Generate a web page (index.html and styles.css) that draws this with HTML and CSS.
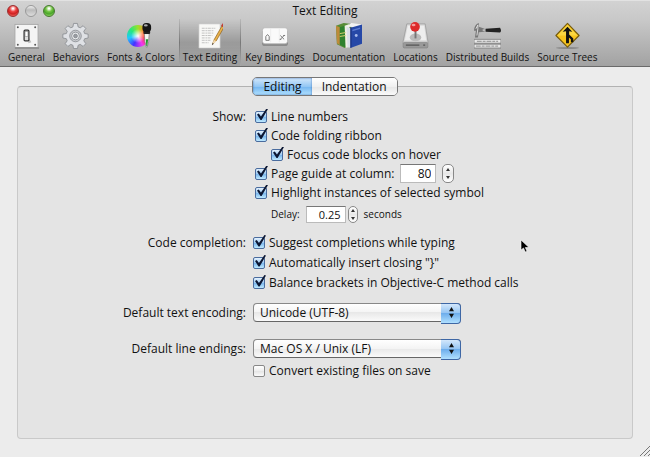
FILE: index.html
```html
<!DOCTYPE html>
<html lang="en">
<head>
    <meta charset="UTF-8">
    <meta name="viewport" content="width=device-width, initial-scale=1.0">
    <title>Text Editing</title>
    <link rel="stylesheet" href="styles.css">
</head>
<body>

    <header class="window-head">
        <div class="titlebar">
            <div class="lights">
                <button type="button" class="light red" aria-label="Close"></button>
                <button type="button" class="light gray" aria-label="Minimize"></button>
                <button type="button" class="light green" aria-label="Zoom"></button>
            </div>
            <h1>Text Editing</h1>
        </div>

        <nav class="toolbar">
            <button type="button" class="tool">
                <svg viewBox="0 0 28 28">
                    <rect x="2" y="2.5" width="24" height="24" fill="#f4f4f4" stroke="#aaa"/>
                    <path d="M2 27h25" stroke="#777"/>
                    <g fill="#555"><circle cx="5" cy="5.500" r="1"/><circle cx="23" cy="5.500" r="1"/><circle cx="5" cy="23.500" r="1"/><circle cx="23" cy="23.500" r="1"/></g>
                    <path d="M15 14l4 7-3 1z" fill="#bbb"/>
                    <rect x="11.500" y="8.500" width="5" height="11" rx="1" fill="#ddd" stroke="#333" stroke-width="1.300"/>
                    <rect x="12.500" y="10" width="3" height="5" fill="#fff" stroke="#777" stroke-width=".5"/>
                </svg>
                General
            </button>
            <button type="button" class="tool">
                <svg viewBox="0 0 28 28">
                    <g fill="#dfe1e5" stroke="#85888e" stroke-width=".8">
                        <path d="M12 1.500h4l.7 3.600 2.200.9 3-2.100 2.800 2.800-2.100 3 .9 2.300 3.600.6v4l-3.600.7-.9 2.200 2.100 3-2.800 2.800-3-2.100-2.200.9-.7 3.400h-4l-.7-3.400-2.200-.9-3 2.100-2.800-2.800 2.100-3-.9-2.200-3.600-.7v-4l3.600-.6.900-2.300-2.100-3 2.800-2.800 3 2.100 2.200-.9z"/>
                        <circle cx="14" cy="14.500" r="6" fill="#c6c8cc"/>
                        <circle cx="14" cy="14.500" r="4" fill="#eef0f2"/>
                        <circle cx="14" cy="14.500" r="2" fill="#999ca2"/>
                    </g>
                </svg>
                Behaviors
            </button>
            <button type="button" class="tool">
                <span class="wheel-icon">
                    <span class="wheel"></span>
                    <svg viewBox="0 0 28 28">
                        <path d="M18 12h5l-.500 8-1.500 6h-1l-1.500-6z" fill="#f4f8f2" stroke="#777" stroke-width=".7"/>
                        <path d="M19.500 18h2.500l-1 7h-1z" fill="#239a30"/>
                        <rect x="17" y="9" width="7" height="3.500" rx="1" fill="#222"/>
                        <rect x="16" y="1" width="9" height="9.500" rx="4" fill="#151515"/>
                        <ellipse cx="19.500" cy="3.500" rx="2" ry="1.200" fill="#aaa"/>
                    </svg>
                </span>
                Fonts &amp; Colors
            </button>
            <button type="button" class="tool selected">
                <svg viewBox="0 0 28 28">
                    <path d="M3 2h22v25H3z" fill="#f8f8f6" stroke="#c4c4c4" stroke-width=".6"/>
                    <g stroke="#aaa" stroke-width=".7" stroke-dasharray="3 .8 2 .6">
                        <path d="M6 6.500h14M6 9h12M6 11.500h12M6 14h11M6 16.500h9M6 19h9M6 21.500h7"/>
                    </g>
                    <path d="M17 23l2-5L27 4l2 1.500-8 14z" fill="#e9b34c" stroke="#8b5c1b" stroke-width=".7"/>
                    <path d="M16.500 24l2-5.500 2.500 1.600z" fill="#f2d9b0"/>
                    <path d="M16.500 24l.8-2.200 1.200.8z" fill="#333"/>
                    <path d="M26 4l2-3 2 1.500-1.800 3z" fill="#c33a34"/>
                </svg>
                Text Editing
            </button>
            <button type="button" class="tool">
                <svg viewBox="0 0 28 28">
                    <rect x="1" y="8" width="27" height="17" rx="3" fill="#8c8c8c"/>
                    <rect x="1.500" y="6" width="26" height="16.500" rx="2.500" fill="#fafafa" stroke="#b5b5b5" stroke-width=".8"/>
                    <path d="M5 19v-4l1.800-2 1.700 2v4zM20 14l4 4m-4 0l4-4m-5 4h2m2-4h2" fill="none" stroke="#777"/>
                    <path d="M10 7v14M19 7v14" stroke="#e6e6e6" stroke-width=".6"/>
                </svg>
                Key Bindings
            </button>
            <button type="button" class="tool">
                <svg viewBox="0 0 28 28">
                    <path d="M1 4l8-3 8 1v23l-7 2-8-4z" fill="#578c37"/>
                    <path d="M1 4l4 1.500v18.500l-3-2z" fill="#bd8a3a"/>
                    <path d="M5 5.500l6-2v23l-6-3z" fill="#2f812f"/>
                    <path d="M10 4l5-2v24l-4 1z" fill="#efefe4"/>
                    <path d="M5 12l6-1M5 15l6-1" stroke="#d7cf71"/>
                    <path d="M12 5l5-4 11 1.500-2 3z" fill="#f2f2f2"/>
                    <path d="M12 5l5 2v20l-4-1z" fill="#d9dfe9"/>
                    <path d="M16 6l12-3.500v20L16 27z" fill="#2648a7"/>
                    <path d="M18 8l8-2.300v1.500l-8 2.300z" fill="#5c7bd2"/>
                    <circle cx="22" cy="14" r="1.500" fill="#a8bbec"/>
                    <path d="M16 6l1-.3v21l-1 .3z" fill="#152c77"/>
                </svg>
                Documentation
            </button>
            <button type="button" class="tool">
                <svg viewBox="0 0 28 28">
                    <path d="M5 2h19l3 19v5H1v-5z" fill="#d9d9d9" stroke="#999" stroke-width=".8"/>
                    <path d="M6 4h17l2 15H3z" fill="#eee"/>
                    <rect x="1.500" y="21" width="25" height="6" rx="1" fill="#999" stroke="#777" stroke-width=".5"/>
                    <path d="M4 24h14m4 0h2" stroke="#555" stroke-width="1.500"/>
                    <ellipse cx="14" cy="16" rx="6" ry="4" fill="#bbb"/>
                    <path d="M14 8v9" stroke="#777" stroke-width="2"/>
                    <circle cx="13.500" cy="5" r="5" fill="#dd2b2b"/>
                    <ellipse cx="12" cy="3" rx="2" ry="1.300" fill="#f69a9a"/>
                </svg>
                Locations
            </button>
            <button type="button" class="tool">
                <svg viewBox="0 0 28 28">
                    <path d="M0 9c0-4 2-7 5-8v4l6 2v3l-6 .5L4 16H1l1-7z" fill="#777"/>
                    <path d="M2 7l2-4v4l-1 7" fill="none" stroke="#ddd"/>
                    <path d="M9 7.500h4v2H9z" fill="#bbb"/>
                    <path d="M12 7l15-1q2 3 0 5l-15-1z" fill="#222"/>
                    <path d="M0 18h28v4H0zM0 23h28v4H0z" fill="#e9e9e9" stroke="#777" stroke-width=".8"/>
                    <path d="M3 20h22M2 25h23" stroke="#888" stroke-dasharray="5 1 3 1"/>
                </svg>
                Distributed Builds
            </button>
            <button type="button" class="tool">
                <svg viewBox="0 0 28 28">
                    <ellipse cx="14" cy="27" rx="12" ry="1" fill="#8a8a8a"/>
                    <path d="M14 1.500l12 12.500-12 12L2 14z" fill="#f8c51e" stroke="#765b0c" stroke-width="1.200" stroke-linejoin="round"/>
                    <path d="M14 3l10.500 11H3.500z" fill="#fbd741"/>
                    <path d="M14 5l5 5-3.300-.5v3.500l4.300 4v4h-2.500v-3l-2-2V22h-3V9.500L9 10z" fill="#111"/>
                </svg>
                Source Trees
            </button>
        </nav>
    </header>

    <main class="panel">
        <div class="tabs" role="tablist">
            <button type="button" role="tab" aria-selected="true" class="tab active">Editing</button>
            <button type="button" role="tab" aria-selected="false" class="tab">Indentation</button>
        </div>

        <form class="settings">
            <!-- show -->
            <section class="group show">
                <h2>Show:</h2>
                <div class="options">
                    <label class="row"><input type="checkbox" checked>Line numbers</label>
                    <label class="row"><input type="checkbox" checked>Code folding ribbon</label>
                    <label class="row indent"><input type="checkbox" checked>Focus code blocks on hover</label>
                    <div class="row">
                        <label class="row"><input type="checkbox" checked>Page guide at column:</label>
                        <input type="text" class="field" value="80" aria-label="Page guide column">
                        <span class="stepper">
                            <button type="button" class="up" aria-label="Increase column"></button>
                            <button type="button" class="down" aria-label="Decrease column"></button>
                        </span>
                    </div>
                    <label class="row"><input type="checkbox" checked>Highlight instances of selected symbol</label>
                    <div class="row delay">
                        <label for="delay">Delay:</label>
                        <input type="text" id="delay" class="field" value="0.25">
                        <span class="stepper">
                            <button type="button" class="up" aria-label="Increase delay"></button>
                            <button type="button" class="down" aria-label="Decrease delay"></button>
                        </span>
                        <span>seconds</span>
                    </div>
                </div>
            </section>

            <!-- code completion -->
            <section class="group completion">
                <h2>Code completion:</h2>
                <div class="options">
                    <label class="row"><input type="checkbox" checked>Suggest completions while typing</label>
                    <label class="row"><input type="checkbox" checked>Automatically insert closing "}"</label>
                    <label class="row"><input type="checkbox" checked>Balance brackets in Objective-C method calls</label>
                </div>
            </section>

            <!-- encoding and line endings -->
            <section class="group encoding">
                <label class="name" for="encoding">Default text encoding:</label>
                <div class="options">
                    <span class="popup">
                        <select id="encoding"><option>Unicode (UTF-8)</option></select>
                    </span>
                </div>
            </section>
            <section class="group endings">
                <label class="name" for="endings">Default line endings:</label>
                <div class="options">
                    <span class="popup">
                        <select id="endings"><option>Mac OS X / Unix (LF)</option></select>
                    </span>
                    <label class="row"><input type="checkbox">Convert existing files on save</label>
                </div>
            </section>
        </form>
    </main>

    <svg class="grip" viewBox="0 0 10 10"><path d="M0 10L10 0M4 10l6-6M8 10l2-2" stroke="#777"/></svg>
    <svg class="cursor" viewBox="0 0 10 14"><path d="M1 1v10l2.500-2 1.800 4 1.700-.8L5.300 8.500H9z" fill="#000" stroke="#fff" stroke-width=".6"/></svg>

</body>
</html>
```

FILE: styles.css
```css
* {
    box-sizing: border-box;
}

body {
    position: relative;
    display: flex;
    flex-direction: column;
    min-height: 100vh;
    margin: 0;
    background-color: #ececec;
    color: #111;
    font-family: "Open Sans", "Noto Sans", sans-serif;
    font-size: 12px;
    line-height: 19px;
}

button, input, select {
    margin: 0;
    padding: 0;
    border: 0;
    color: inherit;
    font: inherit;
}

button {
    background: none;
}

/* title bar and toolbar */
.window-head {
    height: 67px;
    background: linear-gradient(#d2d2d2, #c8c8c8 30%, #a2a2a2);
    border-top: 1px solid #e2e2e2;
    border-bottom: 1px solid #6a6a6a;
}

.titlebar {
    display: grid;
    grid-template-columns: 1fr auto 1fr;
    align-items: center;
    height: 18px;
    padding: 0 7px;
}

.titlebar h1 {
    margin: 0;
    font-size: 12px;
    font-weight: normal;
}

.lights {
    display: flex;
    gap: 6px;
}

.light {
    width: 12px;
    height: 12px;
    border: 1px solid #999;
    border-radius: 50%;
}

.red {
    background: radial-gradient(circle at 50% 25%, #fff 5%, #ee4444 35%, #cf2020 60%, #ff8c80);
    border-color: #9a3030;
}

.gray {
    background: linear-gradient(#eee, #bbb 40%, #ddd);
}

.green {
    background: radial-gradient(circle at 50% 25%, #fff 5%, #74c544 35%, #4aa52c 60%, #b8f47c);
    border-color: #47782f;
}

.toolbar {
    display: flex;
    height: 47px;
    padding-left: 4px;
}

.tool {
    display: flex;
    flex-direction: column;
    align-items: center;
    padding: 3px 3px 0;
    border: solid transparent;
    border-width: 0 1px;
    font-size: 10px;
    line-height: 17px;
    white-space: nowrap;
}

.tool svg {
    display: block;
    width: 27px;
    height: 27px;
}

.tool.selected {
    background: linear-gradient(rgba(0, 0, 0, 0), rgba(0, 0, 0, .15) 50%, rgba(0, 0, 0, .02));
    border-image: linear-gradient(#bbb, #777 50%, #aaa) 1;
}

.wheel-icon {
    position: relative;
}

.wheel-icon svg {
    position: relative;
}

.wheel {
    position: absolute;
    top: 3px;
    left: 0;
    width: 22px;
    height: 22px;
    border-radius: 50%;
    background: radial-gradient(#fff, transparent 45%), conic-gradient(#9de028, #ff8030, #ff3333, #f03af0, #4433ff, #20c8ff, #22e880, #9de028);
}

/* panel */
.panel {
    flex: 1;
    margin: 19px 17px 18px;
    padding-bottom: 40px;
    background-color: #e4e4e4;
    border: 1px solid #c9c9c9;
    border-top-color: #b2b2b2;
    border-radius: 4px;
}

.tabs {
    display: flex;
    width: max-content;
    margin: -10px auto 11px;
    border: 1px solid #777;
    border-radius: 5px;
    overflow: hidden;
    line-height: 17px;
}

.tab {
    padding: 0 10px;
    background: linear-gradient(#fff, #f0f0f0 50%, #e5e5e5 50%, #fafafa);
}

.tab.active {
    background: linear-gradient(#d4e8fb, #93c7f4 50%, #72b4ef 50%, #b2e2ff);
    box-shadow: inset 0 0 2px #2e62ae;
}

/* settings */
.group {
    display: grid;
    grid-template-columns: 228px 1fr;
    gap: 7px;
}

.group h2, .group .name {
    margin: 0;
    font-size: 12px;
    font-weight: normal;
    text-align: right;
}

.row {
    display: flex;
    align-items: center;
}

.show .options {
    padding-left: 2px;
}

.indent {
    padding-left: 16px;
}

.completion {
    margin-top: 9px;
    line-height: 20px;
}

.encoding {
    margin-top: 10px;
}

.endings {
    margin-top: 14px;
}

input[type="checkbox"] {
    appearance: none;
    position: relative;
    width: 12px;
    height: 12px;
    margin-right: 4px;
    background: linear-gradient(#fff, #eee 50%, #e4e4e4 50%, #fafafa);
    border: 1px solid #888;
    border-radius: 2px;
}

input[type="checkbox"]:checked {
    background: linear-gradient(#e4f1fd, #9ac9f3 50%, #78b5ec 50%, #bfe9ff);
    border-color: #4a6c9e;
}

/* check mark */
input[type="checkbox"]:checked::after {
    content: "";
    position: absolute;
    top: -3px;
    left: 1px;
    width: 11px;
    height: 12px;
    background-color: #0c1733;
    clip-path: polygon(0 50%, 16% 42%, 36% 66%, 86% 0, 100% 4%, 42% 96%, 32% 96%);
}

.field {
    width: 36px;
    height: 19px;
    margin: 0 6px;
    padding-right: 4px;
    background-color: #fff;
    border: 1px solid #bbb;
    border-top-color: #777;
    text-align: right;
}

.stepper {
    display: flex;
    flex-direction: column;
    width: 12px;
    height: 19px;
    background: linear-gradient(#fff, #e8e8e8 50%, #fff);
    border: 1px solid #888;
    border-radius: 5px;
}

.stepper button {
    display: flex;
    flex: 1;
    align-items: center;
    justify-content: center;
}

.stepper button::before {
    content: "";
    border: solid transparent;
    border-width: 0 2px;
}

.stepper .up::before {
    border-bottom: 3px solid #333;
}

.stepper .down::before {
    border-top: 3px solid #333;
}

.delay {
    margin-top: 3px;
    padding-left: 16px;
    font-size: 10px;
}

.delay .field {
    width: 40px;
    height: 17px;
    margin: 0 2px 0 6px;
    font-size: 11px;
}

.delay .stepper {
    width: 10px;
    height: 17px;
    margin-right: 6px;
}

/* pop-up menus */
.popup {
    position: relative;
    display: block;
    width: 208px;
    margin-bottom: 3px;
}

.popup select {
    appearance: none;
    display: block;
    width: 100%;
    height: 19px;
    padding-left: 6px;
    background: linear-gradient(#fff, #f4f4f4 50%, #e8e8e8 50%, #fafafa);
    border: 1px solid #888;
    border-bottom-color: #666;
    border-radius: 4px;
    line-height: 17px;
}

.popup::before {
    content: "";
    position: absolute;
    top: 0;
    right: 0;
    width: 19px;
    height: 19px;
    background: linear-gradient(#d3e7fb, #91c3f3 50%, #6eaeec 50%, #b0e0ff);
    border: 1px solid #3e67a5;
    border-left: 0;
    border-radius: 0 4px 4px 0;
    pointer-events: none;
}

.popup::after {
    content: "";
    position: absolute;
    top: 4px;
    right: 7px;
    width: 5px;
    height: 11px;
    background-color: #111;
    clip-path: polygon(50% 0, 100% 38%, 0 38%, 0 62%, 100% 62%, 50% 100%, 0 62%, 0 38%);
    pointer-events: none;
}

.grip {
    position: absolute;
    right: 0;
    bottom: 1px;
    width: 10px;
    height: 10px;
}

.cursor {
    position: absolute;
    top: 239px;
    left: 520px;
    width: 10px;
    height: 14px;
}
```
